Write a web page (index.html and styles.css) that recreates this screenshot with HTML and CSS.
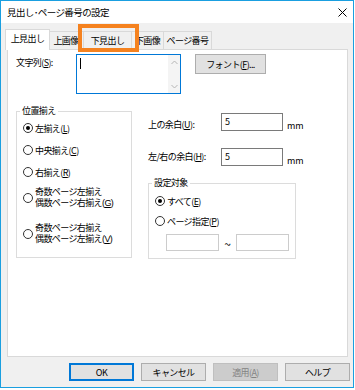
FILE: index.html
```html
<!DOCTYPE html>
<html lang="ja">
  <head>
    <meta charset="UTF-8" />
    <meta name="viewport" content="width=device-width, initial-scale=1.0" />
    <title>見出し･ページ番号の設定</title>
    <link rel="stylesheet" href="styles.css">
  </head>
  <body>
    <div class="window">
      <div class="titlebar">
        <span class="title">見出し･ページ番号の設定</span>
        <svg class="close" width="9" height="9" viewBox="0 0 9 9">
          <path d="M0.5 0.5 L8.5 8.5 M8.5 0.5 L0.5 8.5" stroke="#000" stroke-width="1" fill="none" />
        </svg>
      </div>
      <div class="client">
        <div class="tabs">
          <div class="tab active w1">上見出し</div>
          <div class="tab w2">上画像</div>
          <div class="tab w3">下見出し</div>
          <div class="tab w4">下画像</div>
          <div class="tab w5">ページ番号</div>
        </div>
        <div class="panel">
          <div class="row-text">
            <span class="label-text">文字列(<u>S</u>):</span>
            <div class="textbox">
              <span class="caret"></span>
              <div class="vscroll">
                <svg width="7" height="5" viewBox="0 0 7 5"><path d="M0.5 4 L3.5 1 L6.5 4" stroke="#b5b5b5" fill="none" /></svg>
                <svg width="7" height="5" viewBox="0 0 7 5"><path d="M0.5 1 L3.5 4 L6.5 1" stroke="#b5b5b5" fill="none" /></svg>
              </div>
            </div>
            <button class="btn btn-font">フォント(<u>F</u>)...</button>
          </div>
          <div class="row-main">
            <fieldset class="group group-align">
              <legend>位置揃え</legend>
              <div class="opt"><span class="radio checked"></span><span>左揃え(<u>L</u>)</span></div>
              <div class="opt"><span class="radio"></span><span>中央揃え(<u>C</u>)</span></div>
              <div class="opt"><span class="radio"></span><span>右揃え(<u>R</u>)</span></div>
              <div class="opt opt-two"><span class="radio"></span><span class="two-lines">奇数ページ左揃え<br>偶数ページ右揃え(<u>G</u>)</span></div>
              <div class="opt opt-two opt-last"><span class="radio"></span><span class="two-lines">奇数ページ右揃え<br>偶数ページ左揃え(<u>V</u>)</span></div>
            </fieldset>
            <div class="col-right">
              <div class="field field-top">
                <span class="field-label label-low">上の余白(<u>U</u>):</span>
                <div class="input">5</div>
                <span class="unit">mm</span>
              </div>
              <div class="field field-second">
                <span class="field-label">左/右の余白(<u>H</u>):</span>
                <div class="input">5</div>
                <span class="unit">mm</span>
              </div>
              <fieldset class="group group-target">
                <legend>設定対象</legend>
                <div class="opt opt-small"><span class="radio checked"></span><span>すべて(<u>E</u>)</span></div>
                <div class="opt opt-small"><span class="radio"></span><span>ページ指定(<u>P</u>)</span></div>
                <div class="range">
                  <div class="input input-off"></div>
                  <span class="tilde">~</span>
                  <div class="input input-off"></div>
                </div>
              </fieldset>
            </div>
          </div>
        </div>
        <div class="buttons">
          <button class="btn btn-default">OK</button>
          <button class="btn">キャンセル</button>
          <button class="btn btn-disabled">適用(<u>A</u>)</button>
          <button class="btn">ヘルプ</button>
        </div>
      </div>
      <div class="highlight"></div>
    </div>
  </body>
</html>
```

FILE: styles.css
```css
* {
  box-sizing: border-box;
}
body {
  margin: 0;
  background: #fff;
  font-family: "Noto Sans CJK JP", "Noto Sans", sans-serif;
  font-size: 9px;
  letter-spacing: -0.6px;
  color: #000;
}
.window {
  position: relative;
  width: 354px;
  height: 388px;
  border: 1px solid #1a9fe0;
  background: #f0f0f0;
}
.titlebar {
  height: 22px;
  background: #fff;
  display: flex;
  align-items: center;
  justify-content: space-between;
  padding: 0 6px 0 6px;
}
.title {
  font-size: 9.5px;
}
.close {
  margin-top: 1px;
}
.client {
  padding: 6px 3px 6px 6px;
}
.tabs {
  display: flex;
  align-items: flex-end;
  height: 20px;
}
.tab {
  flex: none;
  height: 18px;
  border: 1px solid #d9d9d9;
  border-bottom: none;
  background: #f0f0f0;
  display: flex;
  align-items: center;
  justify-content: center;
  padding-bottom: 1px;
  margin-right: -1px;
}
.tab.active {
  height: 21px;
  margin: 0 -2px -1px -2px;
  background: #fff;
  position: relative;
  z-index: 1;
  padding-bottom: 3px;
}
.w1 { width: 45px; }
.w2 { width: 36px; }
.w3 { width: 49px; }
.w4 { width: 33px; }
.w5 { width: 49px; }
.panel {
  width: 341px;
  height: 308px;
  border: 1px solid #d9d9d9;
  background: #fff;
  padding: 4px 0 0 8px;
}
.row-text {
  display: flex;
  align-items: flex-start;
}
.label-text {
  width: 60px;
  line-height: 12px;
  margin-top: 3px;
}
.textbox {
  width: 105px;
  height: 40px;
  border: 1px solid #0078d7;
  display: flex;
  justify-content: space-between;
}
.caret {
  width: 1px;
  height: 11px;
  background: #000;
  margin: 3px 0 0 3px;
}
.vscroll {
  width: 12px;
  background: #f4f4f4;
  display: flex;
  flex-direction: column;
  justify-content: space-between;
  align-items: center;
  padding: 5px 0 4px 0;
}
.btn {
  font: inherit;
  letter-spacing: inherit;
  color: #000;
  background: #e1e1e1;
  border: 1px solid #adadad;
  padding: 0;
  width: 65px;
  height: 18px;
}
.btn-font {
  width: 71px;
  height: 20px;
  margin-left: 14px;
}
.btn-default {
  border-color: #0078d7;
  box-shadow: inset 0 0 0 1px #0078d7;
}
.btn-disabled {
  background: #cccccc;
  border-color: #bfbfbf;
  color: #838383;
}
.row-main {
  display: flex;
  align-items: flex-start;
  margin-top: 11px;
}
.group {
  margin: 0;
  padding: 0 0 8px 6px;
  border: 1px solid #dcdcdc;
  min-width: 0;
}
.group legend {
  padding: 0 2px;
  margin-left: -3px;
  line-height: 12px;
}
.group-align {
  width: 116px;
}
.opt {
  display: flex;
  align-items: center;
  height: 22px;
  gap: 2px;
  line-height: 11px;
}
.opt-two {
  height: 30px;
}
.two-lines {
  font-family: "Liberation Sans", "Noto Sans CJK JP", sans-serif;
  line-height: 11px;
}
.opt-last {
  margin-top: 6px;
}
.opt-small {
  height: 20px;
}
.radio {
  flex: none;
  width: 10px;
  height: 10px;
  border: 1px solid #333;
  border-radius: 50%;
  background: #fff;
  display: flex;
  align-items: center;
  justify-content: center;
}
.radio.checked::after {
  content: "";
  width: 4px;
  height: 4px;
  border-radius: 50%;
  background: #000;
}
.col-right {
  display: flex;
  flex-direction: column;
  margin-left: 16px;
}
.field {
  display: flex;
  align-items: center;
}
.field-top {
  margin-top: 8px;
}
.field-second {
  margin-top: 17px;
}
.field-label {
  width: 73px;
  line-height: 12px;
}
.label-low {
  padding-top: 6px;
}
.input {
  width: 62px;
  height: 18px;
  border: 1px solid #7a7a7a;
  background: #fff;
  padding: 2px 0 0 3px;
  line-height: 12px;
}
.unit {
  align-self: flex-end;
  margin-left: 4px;
  line-height: 10px;
  letter-spacing: 0;
}
.group-target {
  width: 148px;
  margin-top: 11px;
  padding: 2px 0 7px 6px;
}
.range {
  display: flex;
  align-items: center;
  margin: 3px 0 0 11px;
}
.input-off {
  width: 53px;
  height: 17px;
  border-color: #cccccc;
}
.tilde {
  width: 17px;
  text-align: center;
  font-size: 12px;
  letter-spacing: 0;
  line-height: 12px;
  padding-top: 3px;
}
.buttons {
  display: flex;
  justify-content: flex-end;
  gap: 7px;
  margin-top: 6px;
}
.highlight {
  position: absolute;
  left: 77px;
  top: 23px;
  width: 61px;
  height: 28px;
  border: 4px solid #f5821f;
  z-index: 2;
}
```
